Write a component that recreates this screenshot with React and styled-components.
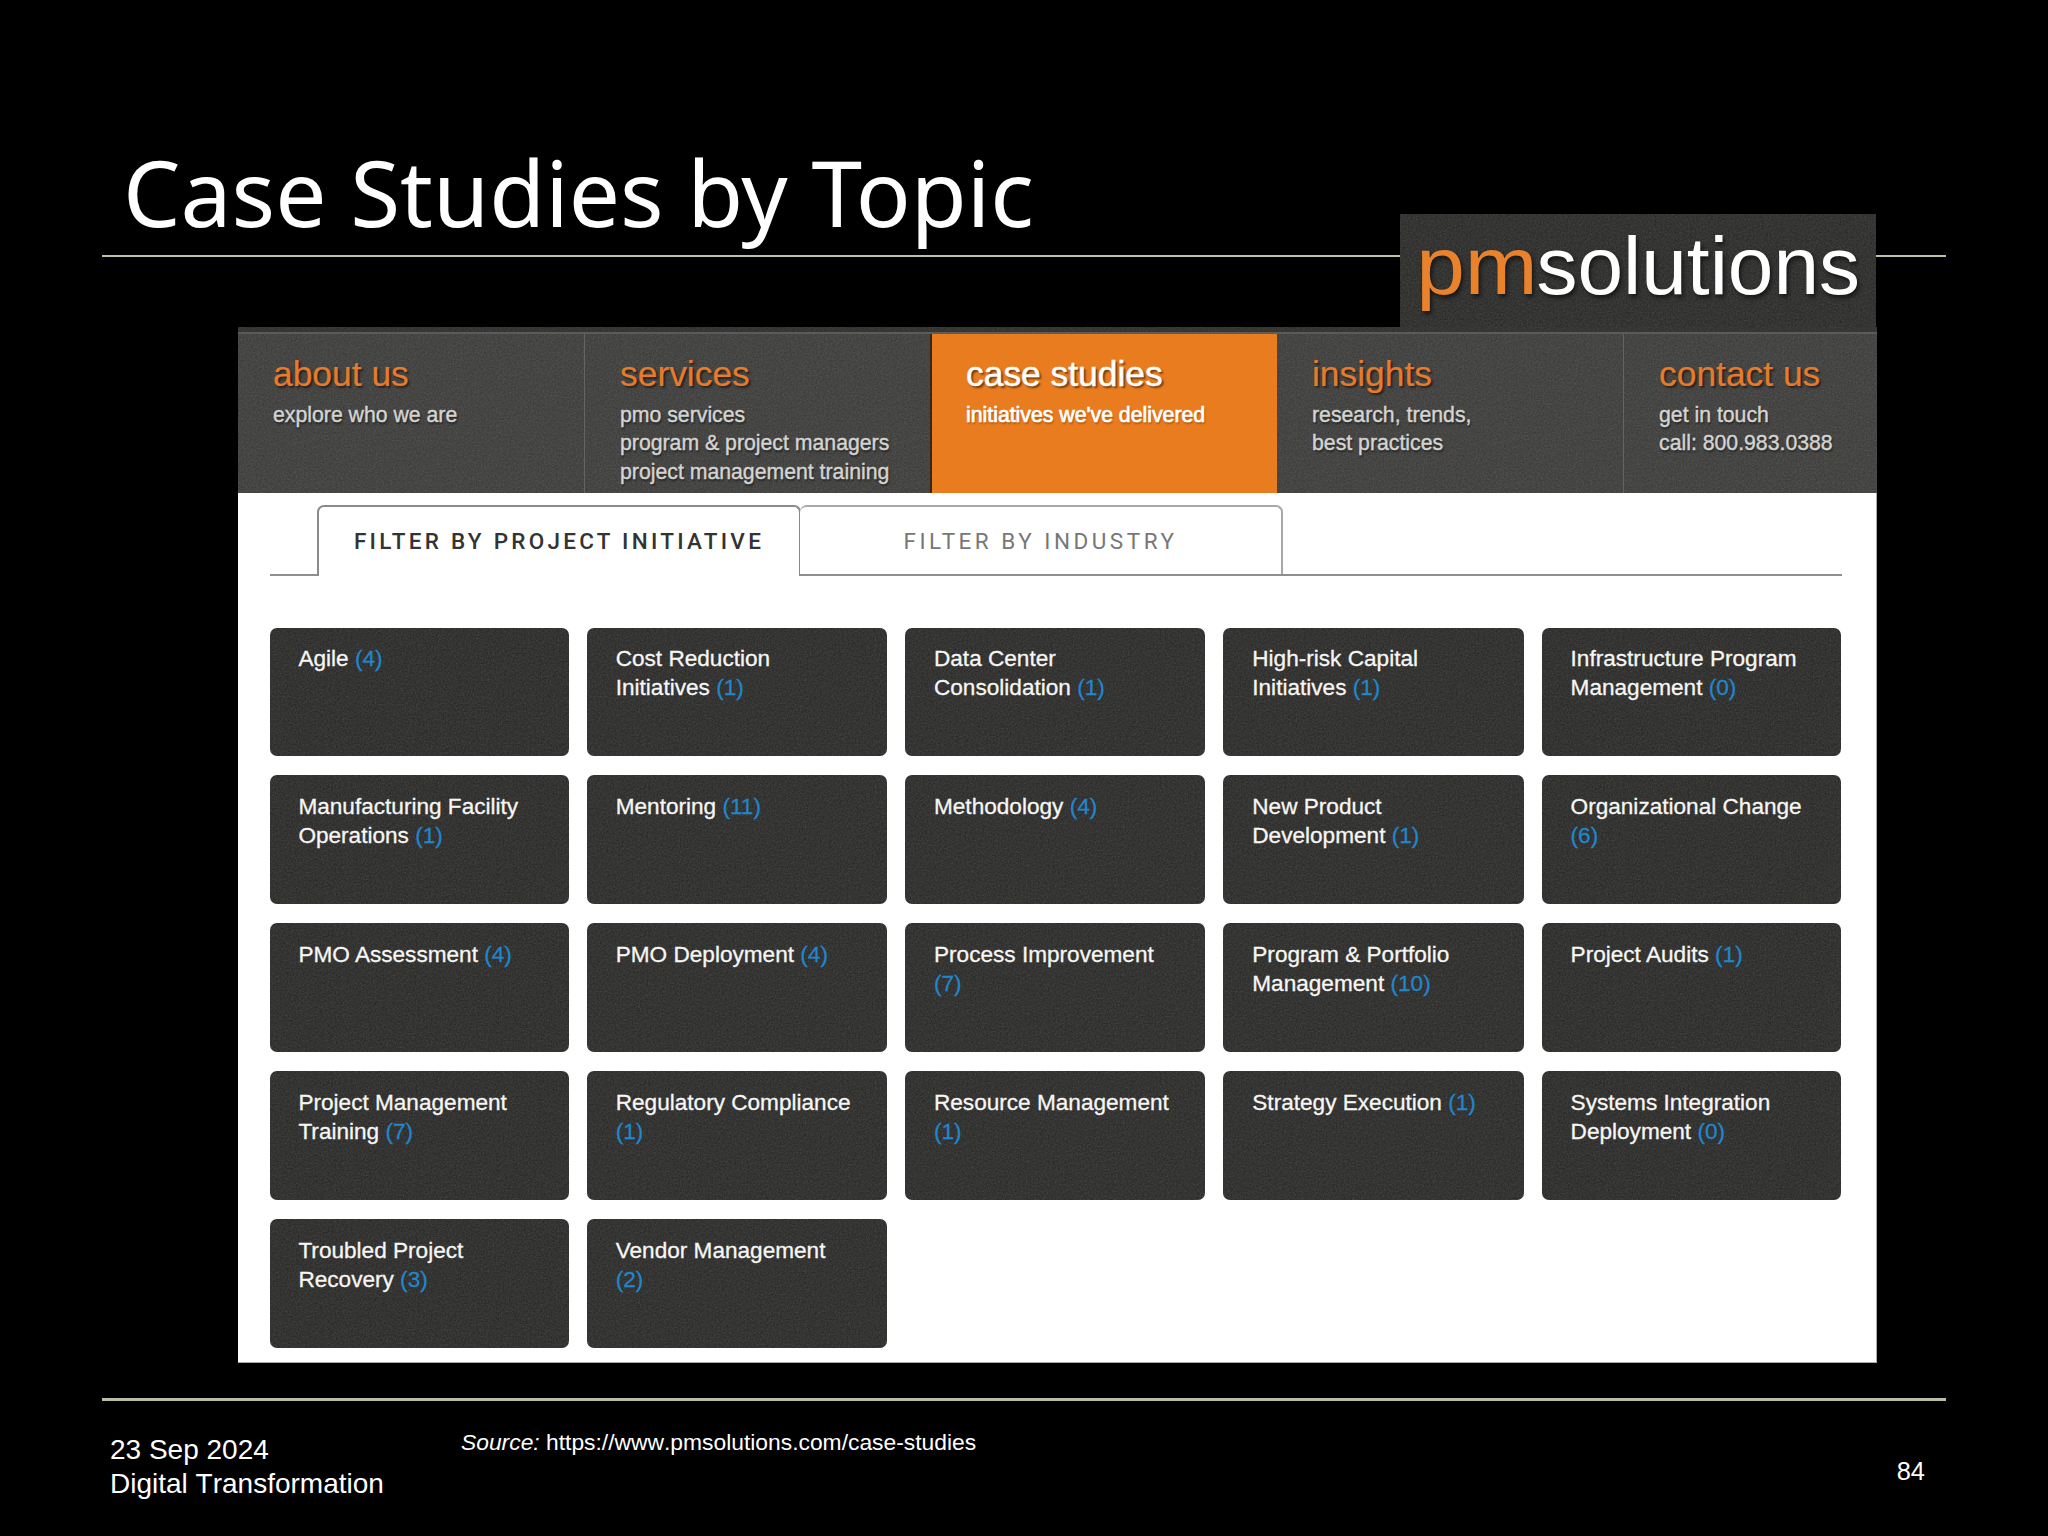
import React from "react";
import styled, { createGlobalStyle } from "styled-components";

const grain = (opacity) =>
  `url("data:image/svg+xml,${encodeURIComponent(
    `<svg xmlns='http://www.w3.org/2000/svg' width='300' height='300'><filter id='n'><feTurbulence type='fractalNoise' baseFrequency='0.6' numOctaves='2' stitchTiles='stitch'/><feColorMatrix type='saturate' values='0.15'/></filter><rect width='300' height='300' filter='url(#n)' opacity='${opacity}'/></svg>`
  )}")`;

const GlobalStyle = createGlobalStyle`
  * {
    box-sizing: border-box;
  }

  body {
    margin: 0;
    background-color: #000;
    font-family: "Liberation Sans", Arial, sans-serif;
  }
`;

const Slide = styled.div`
  display: flex;
  flex-direction: column;
  width: 2048px;
  height: 1536px;
  padding: 0 102px;
  overflow: hidden;
  background-color: #000;
  color: #fff;
`;

const SlideHeader = styled.header`
  height: 257px;
  padding: 142px 0 0 21px;
  border-bottom: 2px solid #bcc3a3;
`;

const Title = styled.h1`
  margin: 0;
  font-family: "Noto Sans", sans-serif;
  font-size: 91px;
  font-weight: 400;
  line-height: 100px;
`;

const Site = styled.main`
  position: relative;
  width: 1639px;
  height: 1036px;
  margin: 70px 0 0 136px;
  border-right: 1px solid #a9ada9;
  border-bottom: 1px solid #a9ada9;
  background-color: #fff;
`;

const LogoBox = styled.div`
  position: absolute;
  right: 0;
  bottom: 100%;
  width: 476px;
  height: 113px;
  background: ${grain(0.22)} #242422;
`;

const LogoText = styled.text`
  font-family: "Liberation Sans", Arial, sans-serif;
  font-size: 82px;
  filter: drop-shadow(2px 3px 2px #161616);
`;

const Nav = styled.nav`
  display: grid;
  grid-template-columns: 347px 347px 345px 347px 1fr;
  height: 166px;
  width: 1639px;
  padding-top: 7px;
  background: linear-gradient(rgba(0, 0, 0, 0.22) 5px, #5b5b59 5px, #5b5b59 7px, transparent 7px),
    ${grain(0.22)} #373735;
`;

const NavItem = styled.a`
  padding: 18px 0 0 ${props => props.$active ? "34px" : "35px"};
  border-right: ${props => props.$divider ? "1px solid #646462" : "none"};
  background-color: ${props => props.$active ? "#ea7c20" : "transparent"};
  box-shadow: ${props => props.$active ? "-1px 0 0 1px #3a2616" : "none"};
  clip-path: ${props => props.$active ? "inset(0 -2px 0 -2px)" : "none"};
`;

const NavTitle = styled.div`
  color: ${props => props.$active ? "#fff" : "#e57b2c"};
  font-size: 35.4px;
  line-height: 45px;
  text-shadow: 2px 2px 2px ${props => props.$active ? "#6b3a10" : "#2a211b"};
  -webkit-text-stroke: ${props => props.$active ? "0.5px" : "0.2px"};
`;

const NavText = styled.div`
  margin-top: 4px;
  color: ${props => props.$active ? "#fff" : "#d4d4d2"};
  font-size: 21.25px;
  line-height: 28.4px;
  white-space: pre-line;
  text-shadow: 1px 2px 2px ${props => props.$active ? "#a8560f" : "#222"};
  -webkit-text-stroke: ${props => props.$active ? "0.7px" : "0.4px"};
`;

const Tabs = styled.div`
  display: flex;
  height: 83px;
  margin: 0 34px 0 32px;
  padding: 12px 0 0 47px;
  background: linear-gradient(#8f8f8f, #8f8f8f) bottom / 100% 2px no-repeat;
`;

const Tab = styled.div`
  display: flex;
  justify-content: center;
  width: ${props => props.$active ? "484px" : "483px"};
  height: ${props => props.$active ? "71px" : "69px"};
  margin-left: ${props => props.$active ? "0" : "-1px"};
  padding-top: 21px;
  border: 2px solid ${props => props.$active ? "#8a8a8a" : "#a8a8a8"};
  border-bottom: none;
  border-left-width: ${props => props.$active ? "2px" : "0"};
  border-radius: 7px 7px 0 0;
  background-color: #fff;
  color: ${props => props.$active ? "#333" : "#777"};
  font-family: Roboto, sans-serif;
  font-size: 22.5px;
  font-weight: ${props => props.$active ? 500 : 400};
  letter-spacing: ${props => props.$active ? "3.25px" : "3.5px"};
  line-height: 27px;
`;

const Cards = styled.div`
  display: grid;
  grid-template-columns: 299.3px repeat(3, 300.3px) 299.3px;
  grid-auto-rows: 128.3px;
  gap: 19.7px 18px;
  margin: 51.5px 0 0 31.5px;
`;

const Card = styled.a`
  padding: 16.5px 30px 0 28.9px;
  border-radius: 7px;
  background: ${grain(0.22)} #242422;
  color: #f6f6f4;
  font-size: 22.6px;
  line-height: 29px;
  -webkit-text-stroke: 0.3px;
`;

const Count = styled.span`
  color: #2186cb;
`;

const SlideFooter = styled.footer`
  display: flex;
  align-items: flex-start;
  height: 138px;
  margin-top: 35px;
  border-top: 3px solid #b9bda6;
  font-kerning: none;
`;

const DateBlock = styled.div`
  width: 350px;
  padding: 32px 0 0 8px;
  font-size: 28px;
  line-height: 34.4px;
`;

const Source = styled.div`
  flex: 1;
  padding-top: 26px;
  padding-left: 9px;
  font-size: 22.83px;
  line-height: 30px;
`;

const PageNumber = styled.div`
  padding: 55px 21px 0 0;
  font-size: 25.4px;
  line-height: 30px;
`;

const navItems = [
  { title: "about us", text: "explore who we are", divider: true },
  { title: "services", text: "pmo services\nprogram & project managers\nproject management training" },
  { title: "case studies", text: "initiatives we've delivered", active: true },
  { title: "insights", text: "research, trends,\nbest practices", divider: true },
  { title: "contact us", text: "get in touch\ncall: 800.983.0388" },
];

const topics = [
  ["Agile", 4],
  ["Cost Reduction Initiatives", 1],
  ["Data Center Consolidation", 1],
  ["High-risk Capital Initiatives", 1],
  ["Infrastructure Program Management", 0],
  ["Manufacturing Facility Operations", 1],
  ["Mentoring", 11],
  ["Methodology", 4],
  ["New Product Development", 1],
  ["Organizational Change", 6],
  ["PMO Assessment", 4],
  ["PMO Deployment", 4],
  ["Process Improvement", 7],
  ["Program & Portfolio Management", 10],
  ["Project Audits", 1],
  ["Project Management Training", 7],
  ["Regulatory Compliance", 1],
  ["Resource Management", 1],
  ["Strategy Execution", 1],
  ["Systems Integration Deployment", 0],
  ["Troubled Project Recovery", 3],
  ["Vendor Management", 2],
];

const Logo = () => {
  return (
    <LogoBox>
      <svg width="476" height="113" viewBox="0 0 476 113">
        <LogoText x="16.2" y="80" textLength="121.5" lengthAdjust="spacingAndGlyphs" fill="#e8822c">pm</LogoText>
        <LogoText x="136.5" y="80" textLength="323.5" lengthAdjust="spacingAndGlyphs" fill="#fff">solutions</LogoText>
      </svg>
    </LogoBox>
  );
};

const App = () => {
  return (
    <Slide>
      <GlobalStyle />
      <SlideHeader>
        <Title>Case Studies by Topic</Title>
      </SlideHeader>
      <Site>
        <Logo />
        <Nav>
          {navItems.map((item) => (
            <NavItem key={item.title} $active={item.active} $divider={item.divider}>
              <NavTitle $active={item.active}>{item.title}</NavTitle>
              <NavText $active={item.active}>{item.text}</NavText>
            </NavItem>
          ))}
        </Nav>
        <Tabs>
          <Tab $active>FILTER BY PROJECT INITIATIVE</Tab>
          <Tab>FILTER BY INDUSTRY</Tab>
        </Tabs>
        <Cards>
          {topics.map(([name, count]) => (
            <Card key={name}>
              {name} <Count>({count})</Count>
            </Card>
          ))}
        </Cards>
      </Site>
      <SlideFooter>
        <DateBlock>
          23 Sep 2024
          <br />
          Digital Transformation
        </DateBlock>
        <Source>
          <i>Source:</i> https://www.pmsolutions.com/case-studies
        </Source>
        <PageNumber>84</PageNumber>
      </SlideFooter>
    </Slide>
  );
};

export default App;
